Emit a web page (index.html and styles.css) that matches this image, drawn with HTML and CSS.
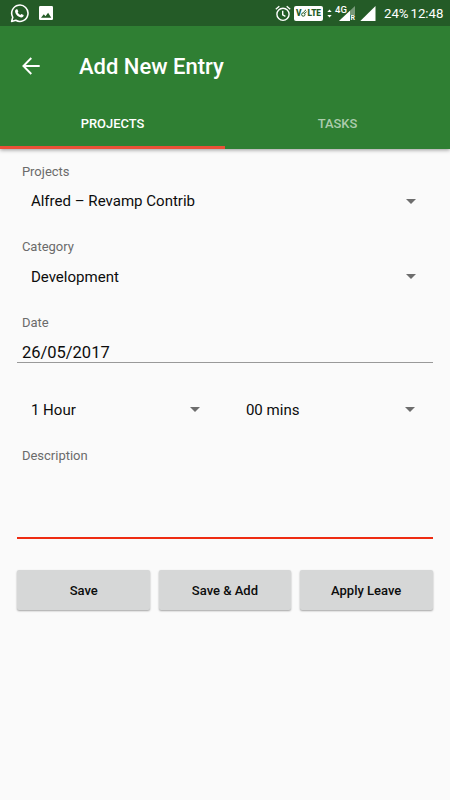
FILE: index.html
```html
<!DOCTYPE html>
<html lang="en">
<head>
<meta charset="utf-8">
<title>Add New Entry</title>
<link rel="stylesheet" href="styles.css">
</head>
<body>
<header class="appbar">
  <div class="status">
    <svg class="whatsapp" width="19" height="19" viewBox="0 0 24 24" fill="#fff"><path d="M2 22l1.5-5.2A10.3 10.3 0 1 1 7.300 20.600Z" fill="none" stroke="#fff" stroke-width="2" stroke-linejoin="round"/><path d="M8.200 6.600h1.100l1.200 2.800-.8 1.300c.8 1.500 1.900 2.500 3.400 3.200l1.200-1.300 2.900 1.400c.2 1.600-1.200 3-2.800 3-4.100-.4-7.700-4-8-7.900 0-1 .8-2.200 1.800-2.500z"/></svg>
    <svg class="picture" width="14" height="14" viewBox="0 0 14 14"><rect width="14" height="14" rx="1.200" fill="#fff"/><path d="M2 11.800l2.800-3.500 1.700 2 2.600-3.500 3.200 5z" fill="#245b27"/></svg>
    <span class="grow"></span>
    <svg class="alarm" width="16" height="17" viewBox="0 0 16 17" fill="none" stroke="#fff" stroke-width="1.400"><circle cx="8" cy="9.300" r="6.100"/><path d="M7.700 5.800v4l2.700 1.500M.8 4.300L4.300 1.300M15.200 4.300L11.700 1.300"/></svg>
    <span class="volte"><span>V</span><svg width="6" height="8" viewBox="0 0 6 8" fill="none" stroke="#245b27" stroke-width="1"><circle cx="2.300" cy="5.500" r="1.700"/><path d="M2.500 3.200L5 .8M3.700 4.500L5.700 2.500"/></svg><span>LTE</span></span>
    <svg class="updown" width="5" height="9" viewBox="0 0 5 9" fill="#fff"><path d="M.3 3L2.500.6 4.700 3zM.3 6L2.500 8.400 4.700 6z"/></svg>
    <span class="network">
      <svg width="20" height="17" viewBox="0 0 20 17"><path d="M20 1v9h-5v6H4z" fill="#fff" opacity=".38"/><path d="M15 5.800V16H4z" fill="#fff"/></svg>
      <span class="gen">4G</span><span class="roam">R</span>
    </span>
    <svg class="signal" width="16" height="15" viewBox="0 0 16 15"><path d="M15.500 0v15H.3z" fill="#fff"/></svg>
    <span class="battery">24%</span>
    <span class="clock">12:48</span>
  </div>
  <div class="toolbar">
    <svg width="18" height="18" viewBox="0 0 18 18" fill="none" stroke="#fff" stroke-width="1.900"><path d="M17.700 9H1.500M9.300 1L1.400 9l7.900 8"/></svg>
    <h1>Add New Entry</h1>
  </div>
  <nav class="tabs"><a class="tab active">PROJECTS</a><a class="tab">TASKS</a></nav>
</header>
<main>
  <label class="label">Projects</label>
  <div class="select"><span>Alfred – Revamp Contrib</span><i class="caret"></i></div>
  <label class="label">Category</label>
  <div class="select"><span>Development</span><i class="caret"></i></div>
  <label class="label">Date</label>
  <div class="date">26/05/2017</div>
  <div class="time">
    <div class="select"><span>1 Hour</span><i class="caret"></i></div>
    <div class="select"><span>00 mins</span><i class="caret"></i></div>
  </div>
  <label class="label">Description</label>
  <div class="description"></div>
  <div class="actions"><button>Save</button><button>Save &amp; Add</button><button>Apply Leave</button></div>
</main>
</body>
</html>
```
FILE: styles.css
```css
* { box-sizing: border-box; }
body {
  margin: 0;
  height: 800px;
  overflow: hidden;
  background: #fafafa;
  color: #0c0c0c;
  font-family: Roboto, sans-serif;
}
svg { display: block; flex: none; }
.appbar {
  height: 149px;
  background: #2f7f33;
  color: #fff;
  box-shadow: 0 1px 4px rgba(0, 0, 0, .4);
}
.status {
  height: 26px;
  display: flex;
  align-items: center;
  padding: 0 7px 0 10px;
  background: #245b27;
}
.picture { margin-left: 10px; }
.grow { flex: 1; }
.alarm { margin-right: 3px; }
.volte {
  width: 29px;
  height: 15px;
  display: flex;
  align-items: center;
  justify-content: center;
  border-radius: 2px;
  background: #fff;
  color: #245b27;
  font-size: 8.300px;
  font-weight: 900;
}
.updown { margin: 0 3px 0 4px; }
.network { position: relative; width: 20px; height: 17px; margin-right: 5px; }
.gen { position: absolute; left: 0; top: 0; font-size: 9.500px; line-height: 10px; font-weight: 500; }
.roam { position: absolute; right: 0; bottom: 0; font-size: 7px; line-height: 7px; font-weight: 700; }
.signal { margin-right: 8px; }
.battery, .clock { font-size: 13.200px; white-space: nowrap; }
.battery { width: 26.500px; }
.clock { width: 32.500px; }
.toolbar {
  height: 80px;
  display: flex;
  align-items: center;
  padding-left: 22px;
}
.toolbar h1 { margin: 2px 0 0 39px; font-size: 22px; font-weight: 500; line-height: 26px; }
.tabs { height: 43px; display: flex; }
.tab {
  flex: 1;
  padding-top: 9px;
  border-bottom: 3px solid transparent;
  text-align: center;
  font-size: 12.900px;
  line-height: 17px;
  font-weight: 500;
  color: #acccad;
}
.tab.active { color: #fff; border-color: #eb5037; }
main { padding: 14px 17.500px 0 17.400px; }
.label {
  display: block;
  height: 17px;
  padding-left: 4.500px;
  font-size: 13px;
  line-height: 17px;
  color: #6b6b6b;
}
.select {
  height: 26px;
  display: flex;
  align-items: center;
  justify-content: space-between;
  padding: 0 17px 0 13.500px;
  font-size: 15.050px;
}
.label + .select { margin: 8.400px 0 24px; }
.caret { border: 5.500px solid transparent; border-top-color: #6d6d6d; border-bottom: 0; }
.date {
  height: 32px;
  padding: 12px 4.500px 0;
  border-bottom: 1px solid #999;
  font-size: 16.500px;
  line-height: 20px;
}
.time { display: grid; grid-template-columns: 200px 200px; column-gap: 15px; margin: 34.200px 0 24px; }
.description { height: 75px; border-bottom: 2px solid #ee2c12; }
.actions { display: grid; grid-template-columns: repeat(3, 1fr); gap: 8.500px; margin-top: 31px; }
button {
  height: 40px;
  padding: 1px 0 0;
  border: 0;
  border-radius: 2px;
  background: #d6d7d7;
  color: #0c0c0c;
  box-shadow: 0 1px 2px rgba(0, 0, 0, .35);
  font: 500 13px Roboto, sans-serif;
}
```
